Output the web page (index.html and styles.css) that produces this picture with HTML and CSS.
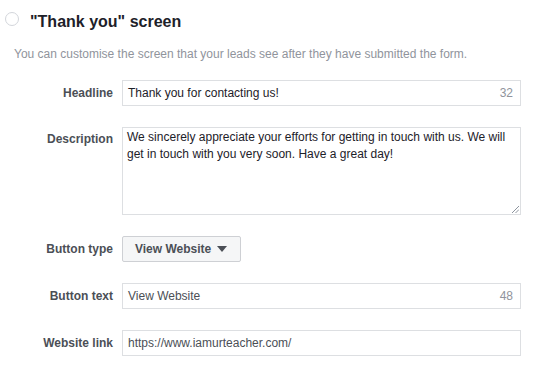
FILE: index.html
```html
<!DOCTYPE html>
<html lang="en">
<head>
  <meta charset="UTF-8">
  <meta name="viewport" content="width=device-width, initial-scale=1">
  <title>Thank you screen</title>
  <link rel="stylesheet" href="styles.css">
</head>
<body>

  <section class="thanks-section">
    <div class="section-header">
      <span class="radio"></span>
      <h2 class="section-title">"Thank you" screen</h2>
    </div>
    <p class="hint">You can customise the screen that your leads see after they have submitted the form.</p>

    <div class="form">
      <div class="form-row">
        <div class="label">Headline</div>
        <div class="field">
          <span class="value dark">Thank you for contacting us!</span>
          <span class="count">32</span>
        </div>
      </div>

      <div class="form-row top">
        <div class="label">Description</div>
        <div class="field textarea">
          <span class="value dark">We sincerely appreciate your efforts for getting in touch with us. We will<br>get in touch with you very soon. Have a great day!</span>
          <svg class="grip" width="8" height="8" viewBox="0 0 8 8">
            <path d="M1 8 L8 1 M4.5 8 L8 4.5" stroke="#8d949e" stroke-width="1" fill="none"/>
          </svg>
        </div>
      </div>

      <div class="form-row">
        <div class="label">Button type</div>
        <div class="select-btn">
          <span>View Website</span>
          <span class="caret"></span>
        </div>
      </div>

      <div class="form-row">
        <div class="label">Button text</div>
        <div class="field">
          <span class="value">View Website</span>
          <span class="count">48</span>
        </div>
      </div>

      <div class="form-row">
        <div class="label">Website link</div>
        <div class="field">
          <span class="value">https://www.iamurteacher.com/</span>
        </div>
      </div>
    </div>
  </section>

</body>
</html>
```

FILE: styles.css
```css
* {
  margin: 0;
  padding: 0;
  box-sizing: border-box;
}
body {
  background: #fff;
  color: #1d2129;
  font-family: "Liberation Sans", Arial, sans-serif;
  font-size: 12px;
}
.thanks-section {
  width: 534px;
  padding-top: 12px;
}
.section-header {
  display: flex;
  align-items: flex-start;
  gap: 11px;
  padding-left: 5px;
  height: 20px;
}
.radio {
  width: 14px;
  height: 14px;
  border: 1px solid #d3d6db;
  border-radius: 50%;
  background: #fff;
}
.section-title {
  font-size: 16px;
  line-height: 20px;
  font-weight: bold;
  color: #1d2129;
}
.hint {
  margin-top: 14px;
  padding-left: 14px;
  color: #90949c;
  line-height: 16px;
}
.form {
  margin-top: 18px;
  display: flex;
  flex-direction: column;
  gap: 21px;
}
.form-row {
  display: grid;
  grid-template-columns: 113px 399px;
  column-gap: 9px;
  align-items: center;
}
.form-row.top {
  align-items: start;
}
.label {
  text-align: right;
  font-weight: bold;
  color: #4b4f56;
  line-height: 16px;
}
.form-row.top .label {
  padding-top: 4px;
}
.field {
  height: 26px;
  border: 1px solid #dddfe2;
  background: #fff;
  display: flex;
  align-items: center;
  justify-content: space-between;
  padding: 0 7px 0 5px;
  color: #4b4f56;
}
.value.dark {
  color: #1d2129;
}
.count {
  color: #90949c;
}
.field.textarea {
  height: 88px;
  position: relative;
  align-items: flex-start;
  padding: 1px 8px 0 4px;
  line-height: 17px;
}
.grip {
  position: absolute;
  right: 1px;
  bottom: 1px;
}
.select-btn {
  width: 119px;
  height: 26px;
  display: flex;
  align-items: center;
  gap: 6px;
  padding: 0 12px;
  border: 1px solid #ced0d4;
  border-radius: 2px;
  background: #f5f6f7;
  font-weight: bold;
  color: #4b4f56;
}
.caret {
  width: 0;
  height: 0;
  border-left: 5px solid transparent;
  border-right: 5px solid transparent;
  border-top: 6px solid #4b4f56;
}
```
